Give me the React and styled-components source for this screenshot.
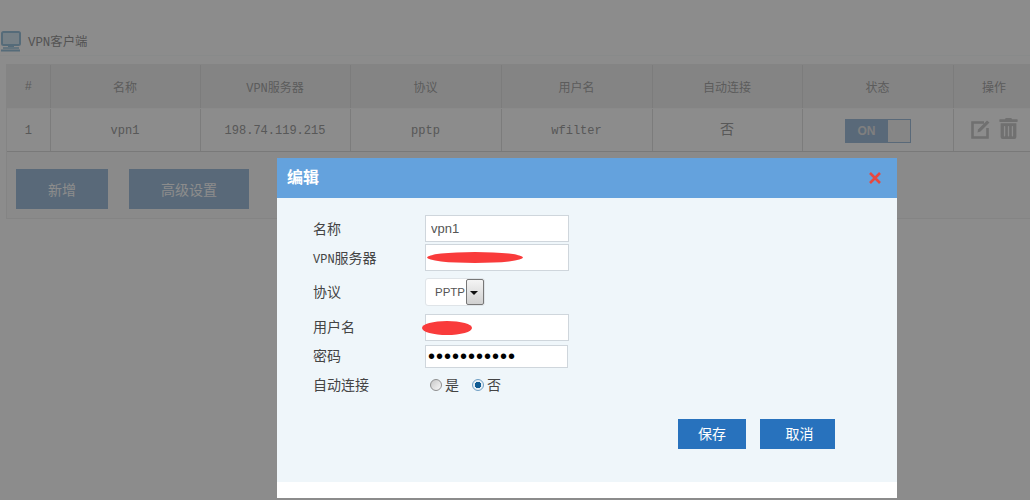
import React from 'react'
import styled, { createGlobalStyle } from 'styled-components'
import { FaTrashAlt } from 'react-icons/fa'

const cjk = `"Noto Sans CJK SC", sans-serif`
const slab = `"Liberation Mono", "Noto Sans CJK SC", monospace`

const columns = [
  { label: '#', width: 43 },
  { label: '名称', width: 150 },
  { label: 'VPN服务器', width: 150 },
  { label: '协议', width: 151 },
  { label: '用户名', width: 151 },
  { label: '自动连接', width: 150 },
  { label: '状态', width: 151 },
  { label: '操作', width: 82 },
]

const App = () => (
  <Page>
    <GlobalStyle />
    <TitleRow>
      <svg width="22" height="21" viewBox="0 0 22 21">
        <rect x="2" y="1" width="18" height="13" rx="1.5" fill="#d8eaf5" stroke="#9cc3dc" strokeWidth="2" />
        <rect x="8" y="14" width="6" height="2" fill="#9cc3dc" />
        <rect x="3" y="16" width="16" height="2" fill="#b5d3e6" />
        <rect x="1" y="18.5" width="19" height="2" fill="#9cc3dc" />
      </svg>
      <TitleText>VPN客户端</TitleText>
    </TitleRow>
    <Panel>
      <Table>
        <colgroup>
          {columns.map((c) => (
            <col key={c.label} style={{ width: c.width }} />
          ))}
        </colgroup>
        <thead>
          <tr>
            {columns.map((c) => (
              <Th key={c.label}>{c.label}</Th>
            ))}
          </tr>
        </thead>
        <tbody>
          <tr>
            <Td>1</Td>
            <Td>vpn1</Td>
            <Td>198.74.119.215</Td>
            <Td>pptp</Td>
            <Td>wfilter</Td>
            <Td $cjk>否</Td>
            <Td>
              <Toggle>
                <ToggleOn>ON</ToggleOn>
                <ToggleKnob />
              </Toggle>
            </Td>
            <Td>
              <Actions>
                <svg width="21" height="20" viewBox="0 0 21 20">
                  <path d="M13 3.5 H1.5 V18.5 H16.5 V9" fill="none" stroke="currentColor" strokeWidth="2.6" />
                  <path d="M7 10.5 L16 1.5 L18.5 3.5 L9.5 12.5 L6.5 13.5 Z" fill="currentColor" />
                </svg>
                <FaTrashAlt size={21} />
              </Actions>
            </Td>
          </tr>
        </tbody>
      </Table>
      <PanelButtons>
        <PanelButton $width={92}>新增</PanelButton>
        <PanelButton $width={120}>高级设置</PanelButton>
      </PanelButtons>
    </Panel>

    <Overlay />

    <Modal>
      <ModalHeader>
        <ModalTitle>编辑</ModalTitle>
        <CloseIcon viewBox="0 0 12 12">
          <path d="M1 1 L11 11 M11 1 L1 11" stroke="#e8483f" strokeWidth="2.6" />
        </CloseIcon>
      </ModalHeader>
      <ModalBody>
        <FormRow $height={27}>
          <Label $lift={2}>名称</Label>
          <TextInput defaultValue="vpn1" readOnly />
        </FormRow>
        <FormRow $height={27} $top={2}>
          <Label $lift={2}>
            <LatinPart>VPN</LatinPart>服务器
          </Label>
          <InputWrap>
            <TextInput readOnly />
            <Scribble $left={2} $top={8} $width={96} $height={11} />
          </InputWrap>
        </FormRow>
        <FormRow $height={28} $top={7}>
          <Label $lift={2}>协议</Label>
          <FakeSelect>
            <SelectValue>PPTP</SelectValue>
            <SelectArrow />
          </FakeSelect>
        </FormRow>
        <FormRow $height={27} $top={8}>
          <Label $lift={4}>用户名</Label>
          <InputWrap>
            <TextInput readOnly />
            <Scribble $left={-3} $top={7} $width={50} $height={14} />
          </InputWrap>
        </FormRow>
        <FormRow $height={23} $top={4}>
          <Label $lift={4}>密码</Label>
          <PasswordInput type="password" defaultValue="12345678901" readOnly />
        </FormRow>
        <FormRow $height={24} $top={5}>
          <Label $lift={2}>自动连接</Label>
          <RadioGroup>
            <RadioDot />
            <RadioText>是</RadioText>
            <RadioDot $checked />
            <RadioText>否</RadioText>
          </RadioGroup>
        </FormRow>
        <ModalButtons>
          <ModalButton $width={68}>保存</ModalButton>
          <ModalButton $width={75} $nudge={4}>取消</ModalButton>
        </ModalButtons>
      </ModalBody>
      <ModalFooter />
    </Modal>
  </Page>
)

export default App

const GlobalStyle = createGlobalStyle`
  html, body {
    margin: 0;
    padding: 0;
    background: #fff;
  }
`

const Page = styled.div`
  position: relative;
  width: 1030px;
  height: 500px;
  overflow: hidden;
  background: #ffffff;
  font-family: ${cjk};
`

const TitleRow = styled.div`
  display: flex;
  align-items: center;
  gap: 6px;
  height: 27px;
  padding-top: 28px;
  border-bottom: 1px solid #f8fbfc;
`

const TitleText = styled.span`
  font-family: ${slab};
  font-size: 12.4px;
  color: #989898;
  padding-bottom: 2px;
`

const Panel = styled.div`
  margin: 8px 0 0 6px;
  height: 155px;
  background: #fbfbfb;
  border: 1px solid #f0f0f0;
  border-right: 0;
  box-sizing: border-box;
`

const Table = styled.table`
  width: 1028px;
  table-layout: fixed;
  border-collapse: collapse;
`

const Th = styled.th`
  box-sizing: border-box;
  height: 43px;
  padding: 2px 0 0;
  font-weight: 400;
  font-family: ${slab};
  font-size: 12px;
  color: #a8a8a8;
  background: #f1f1f1;
  border-right: 1px solid #e2e2e2;
  border-bottom: 1px solid #fbfbfb;
`

const Td = styled.td`
  box-sizing: border-box;
  height: 43px;
  padding: ${(p) => (p.$cjk ? '0 0 3px' : '3px 0 0')};
  text-align: center;
  font-family: ${(p) => (p.$cjk ? cjk : slab)};
  font-size: ${(p) => (p.$cjk ? 14 : 12)}px;
  color: #a0a0a0;
  background: #ffffff;
  border-right: 1px solid #e2e2e2;
  border-bottom: 1px solid #dcdcdc;
`

const Toggle = styled.div`
  display: inline-flex;
  vertical-align: middle;
  width: 66px;
  height: 24px;
  box-sizing: border-box;
  border: 1px solid #a2bfdc;
  background: #a2bfdc;
`

const ToggleOn = styled.span`
  flex: 1;
  display: flex;
  align-items: center;
  justify-content: center;
  font: 700 12px "Liberation Sans", sans-serif;
  color: #e8e8e8;
`

const ToggleKnob = styled.span`
  width: 22px;
  background: #f4f4f4;
`

const Actions = styled.div`
  display: flex;
  align-items: center;
  gap: 6px;
  padding: 0 0 5px 17px;
  color: #cccccc;
`

const PanelButtons = styled.div`
  display: flex;
  gap: 21px;
  padding: 17px 0 0 9px;
`

const PanelButton = styled.div`
  display: flex;
  align-items: center;
  justify-content: center;
  width: ${(p) => p.$width}px;
  height: 40px;
  background: #a2bfdc;
  color: #ffffff;
  font-size: 14px;
`

const Overlay = styled.div`
  position: absolute;
  inset: 0;
  background: rgba(0, 0, 0, 0.45);
`

const Modal = styled.div`
  position: absolute;
  left: 277px;
  top: 158px;
  width: 620px;
  height: 340px;
  display: flex;
  flex-direction: column;
  background: #ffffff;
`

const ModalHeader = styled.div`
  display: flex;
  align-items: center;
  justify-content: space-between;
  height: 40px;
  padding: 0 16px 0 10px;
  background: #64a2dd;
`

const ModalTitle = styled.span`
  font-size: 16px;
  font-weight: 700;
  color: #ffffff;
  padding-bottom: 4px;
`

const CloseIcon = styled.svg`
  width: 12px;
  height: 12px;
`

const ModalBody = styled.div`
  height: 284px;
  padding-top: 17px;
  box-sizing: border-box;
  background: #eff6fa;
`

const FormRow = styled.div`
  display: flex;
  align-items: center;
  height: ${(p) => p.$height}px;
  margin-top: ${(p) => p.$top || 0}px;
  padding-left: 36px;
`

const Label = styled.label`
  width: 112px;
  padding-bottom: ${(p) => p.$lift || 0}px;
  font-size: 14px;
  color: #444444;
`

const LatinPart = styled.span`
  font-family: ${slab};
  font-size: 12px;
`

const InputWrap = styled.div`
  position: relative;
  height: 100%;
`

const TextInput = styled.input`
  display: block;
  width: 144px;
  height: 27px;
  padding: 0 5px;
  box-sizing: border-box;
  border: 1px solid #cfd6dc;
  background: #ffffff;
  outline: none;
  font: 13px "Liberation Sans", sans-serif;
  color: #555555;
`

const PasswordInput = styled(TextInput)`
  width: 143px;
  height: 23px;
  padding: 0 2px;
  color: #000000;
  font-size: 20px;
  letter-spacing: 1px;
`

const Scribble = styled.span`
  position: absolute;
  left: ${(p) => p.$left}px;
  top: ${(p) => p.$top}px;
  width: ${(p) => p.$width}px;
  height: ${(p) => p.$height}px;
  border-radius: 50%;
  background: #f93b3b;
`

const FakeSelect = styled.div`
  display: flex;
  align-items: stretch;
  width: 60px;
  height: 28px;
  box-sizing: border-box;
  border: 1px solid #dfe4e8;
  border-radius: 3px;
  background: #ffffff;
`

const SelectValue = styled.span`
  flex: 1;
  display: flex;
  align-items: center;
  padding-left: 9px;
  font: 11.5px "Liberation Sans", sans-serif;
  color: #555555;
`

const SelectArrow = styled.span`
  position: relative;
  width: 16px;
  border: 1px solid #777777;
  border-radius: 2px;
  background: linear-gradient(#f4f4f4, #d0d0d0);

  &::after {
    content: '';
    position: absolute;
    left: 3px;
    top: 11px;
    border-left: 4px solid transparent;
    border-right: 4px solid transparent;
    border-top: 4px solid #111111;
  }
`

const RadioGroup = styled.div`
  display: flex;
  align-items: center;
  padding-left: 5px;
`

const RadioDot = styled.span`
  width: 12px;
  height: 12px;
  box-sizing: border-box;
  border-radius: 50%;
  border: 1px solid ${(p) => (p.$checked ? '#6f9fc4' : '#8f8f8f')};
  background: ${(p) =>
    p.$checked
      ? 'radial-gradient(circle, #0f5b93 0 3px, #e6eef4 3.5px)'
      : 'linear-gradient(135deg, #c8c8c8, #f8f8f8)'};
`

const RadioText = styled.span`
  width: 27px;
  margin-left: 3px;
  padding-bottom: 2px;
  font-size: 14px;
  color: #444444;
`

const ModalButtons = styled.div`
  display: flex;
  justify-content: flex-end;
  gap: 14px;
  margin-top: 22px;
  padding-right: 62px;
`

const ModalButton = styled.div`
  display: flex;
  align-items: center;
  justify-content: center;
  width: ${(p) => p.$width}px;
  height: 30px;
  box-sizing: border-box;
  padding: 0 0 2px ${(p) => p.$nudge || 0}px;
  background: #2872bd;
  color: #ffffff;
  font-size: 14px;
`

const ModalFooter = styled.div`
  flex: 1;
  background: #ffffff;
`
